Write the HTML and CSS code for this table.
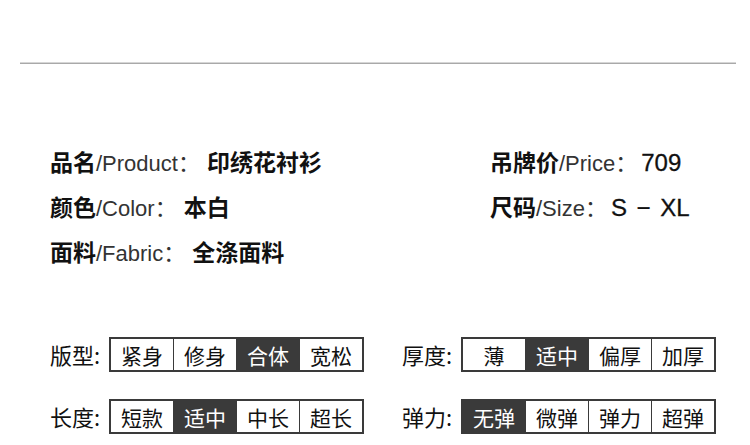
FILE: index.html
```html
<!DOCTYPE html>
<html lang="zh">
<head>
<meta charset="utf-8">
<link rel="stylesheet" href="styles.css">
</head>
<body>
<div class="page">
  <div class="rule"></div>
  <div class="info">
    <div class="col col-left">
      <div class="row"><b class="k">品名</b><span class="en">/Product</span><span class="colon">：</span><b class="v">印绣花衬衫</b></div>
      <div class="row"><b class="k">颜色</b><span class="en">/Color</span><span class="colon">：</span><b class="v">本白</b></div>
      <div class="row"><b class="k">面料</b><span class="en">/Fabric</span><span class="colon">：</span><b class="v">全涤面料</b></div>
    </div>
    <div class="col col-right">
      <div class="row"><b class="k">吊牌价</b><span class="en">/Price</span><span class="colon">：</span><span class="num">709</span></div>
      <div class="row"><b class="k">尺码</b><span class="en">/Size</span><span class="colon">：</span><span class="num size">S − XL</span></div>
    </div>
  </div>
  <div class="specs">
    <div class="spec">
      <span class="label">版型:</span>
      <div class="opts"><span class="opt">紧身</span><span class="opt">修身</span><span class="opt on">合体</span><span class="opt">宽松</span></div>
    </div>
    <div class="spec">
      <span class="label">厚度:</span>
      <div class="opts"><span class="opt">薄</span><span class="opt on">适中</span><span class="opt">偏厚</span><span class="opt">加厚</span></div>
    </div>
    <div class="spec">
      <span class="label">长度:</span>
      <div class="opts"><span class="opt">短款</span><span class="opt on">适中</span><span class="opt">中长</span><span class="opt">超长</span></div>
    </div>
    <div class="spec">
      <span class="label">弹力:</span>
      <div class="opts"><span class="opt on">无弹</span><span class="opt">微弹</span><span class="opt">弹力</span><span class="opt">超弹</span></div>
    </div>
  </div>
</div>
</body>
</html>
```
FILE: styles.css
```css
* { box-sizing: border-box; }
html, body { margin: 0; padding: 0; background: #fff; }
body {
  font-family: "Liberation Sans", "Noto Sans CJK SC", sans-serif;
  color: #111;
  width: 750px;
  height: 445px;
  overflow: hidden;
}
.page { padding-top: 62px; }
.rule {
  margin: 0 14px 0 20px;
  height: 2px;
  border-top: 1px solid #d6d6d6;
  border-bottom: 1px solid #a9a9a9;
}
.info {
  display: flex;
  padding: 82px 0 0 50px;
}
.col { display: flex; flex-direction: column; gap: 14px; }
.col-left { width: 440px; }
.row {
  display: flex;
  align-items: baseline;
  height: 31px;
  line-height: 31px;
  white-space: nowrap;
}
.k {
  font-family: "Noto Sans CJK SC", sans-serif;
  font-weight: 700;
  font-size: 23px;
  color: #111;
}
.en {
  font-size: 22px;
  color: #333;
  font-weight: 400;
}
.colon {
  font-family: "Noto Sans CJK SC", sans-serif;
  font-size: 22px;
  color: #333;
  width: 26px;
}
.v {
  font-family: "Noto Sans CJK SC", sans-serif;
  font-weight: 700;
  font-size: 23px;
  margin-left: 3px;
}
.num {
  font-size: 24px;
  font-weight: 400;
  color: #111;
  -webkit-text-stroke: 0.3px #111;
}
.size { word-spacing: 3px; }
.specs {
  display: grid;
  grid-template-columns: 352px 350px;
  row-gap: 27px;
  padding: 70px 0 0 50px;
}
.spec { display: flex; align-items: center; }
.label {
  font-family: "Noto Sans CJK SC", sans-serif;
  font-size: 22px;
  color: #111;
  width: 59px;
  line-height: 35px;
}
.opts {
  display: flex;
  border: 2px solid #3a3a3a;
  height: 35px;
}
.opt {
  width: 63px;
  display: flex;
  align-items: center;
  justify-content: center;
  font-family: "Noto Sans CJK SC", sans-serif;
  font-size: 21px;
  color: #111;
  border-left: 1.5px solid #3a3a3a;
}
.opt:first-child { border-left: none; width: 62px; }
.opt.on { background: #3a3a3a; color: #fff; }
```
